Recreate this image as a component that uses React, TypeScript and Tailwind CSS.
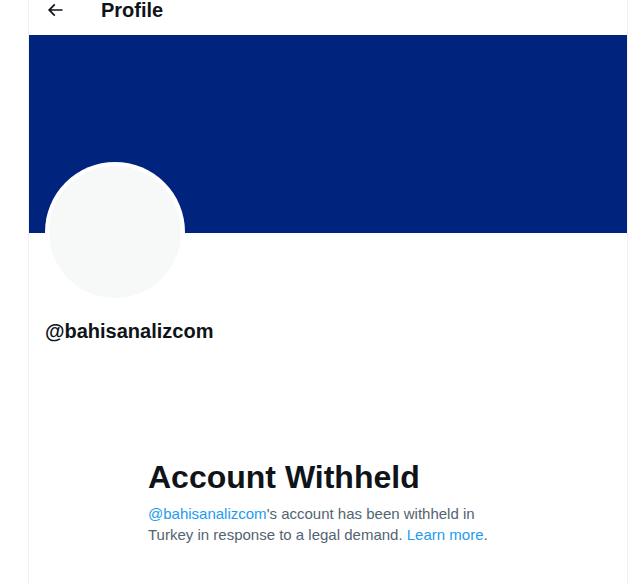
export default function App() {
  return (
    <div className="min-h-[584px] bg-white font-['Liberation_Sans',Arial,sans-serif] text-[#0f1419]">
      <div className="ml-[28px] w-[600px] min-h-[584px] border-x border-[#eff3f4]">
        {/* header, partly scrolled out of view */}
        <div className="h-[35px] overflow-hidden">
          <div className="-mt-[17px] flex h-[53px] items-center px-4">
            <svg viewBox="0 0 24 24" className="h-5 w-5 fill-current text-[#0f1419]">
              <path d="M7.414 13l5.043 5.04-1.414 1.42L3.586 12l7.457-7.46 1.414 1.42L7.414 11H21v2H7.414z" />
            </svg>
            <h2 className="ml-9 text-[20px] font-bold leading-6">Profile</h2>
          </div>
        </div>

        <div className="h-[198px] bg-[#00247d]" />

        <div className="px-4">
          <div className="-mt-[71px] h-[140px] w-[140px] rounded-full bg-white p-1">
            <div className="h-full w-full rounded-full bg-[#f7f9f9]" />
          </div>
          <div className="mt-[17px] text-[20px] font-bold leading-6">@bahisanalizcom</div>
        </div>

        <div className="mx-auto mt-[116px] w-[400px] px-5">
          <h1 className="text-[32px] font-extrabold leading-9">Account Withheld</h1>
          <p className="mt-[8px] text-[15px] leading-[21px] text-[#536471]">
            <span className="text-[#1d9bf0]">@bahisanalizcom</span>'s account has been withheld in Turkey in
            response to a legal demand. <span className="text-[#1d9bf0]">Learn more</span>.
          </p>
        </div>
      </div>
    </div>
  );
}
